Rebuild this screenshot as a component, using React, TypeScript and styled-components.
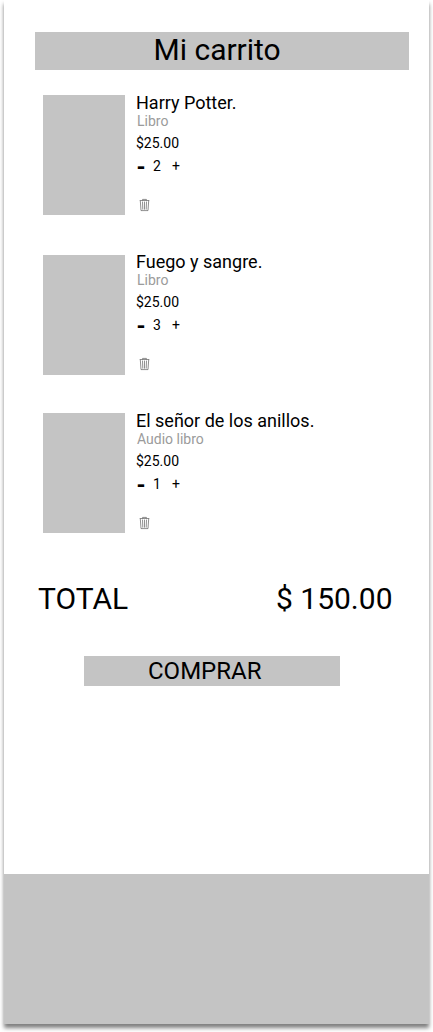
import React from "react";
import styled, { createGlobalStyle } from "styled-components";

const GlobalStyle = createGlobalStyle`
  * { box-sizing: border-box; }
  body {
    margin: 0;
    background: #fff;
    color: #000;
    font-family: Roboto, sans-serif;
  }
`;

const Page = styled.div`
  height: 1032px;
  padding: 0 4px 8px;
  overflow: hidden;
  background: #fff;
`;

const Screen = styled.main`
  display: flex;
  flex-direction: column;
  width: 425px;
  height: 1024px;
  background: #fff;
  box-shadow: 0 4px 4px rgba(0, 0, 0, 0.5);
`;

const Header = styled.h1`
  width: 374px;
  height: 38px;
  margin: 32px 0 0 31px;
  padding-left: 118.5px;
  background: #c4c4c4;
  font-size: 30px;
  font-weight: 400;
  line-height: 35px;
  white-space: nowrap;
`;

const Items = styled.ul`
  margin: 22px 0 0;
  padding: 0 0 0 39px;
  list-style: none;
`;

const Item = styled.li`
  display: flex;
  align-items: flex-start;
  height: 159px;
`;

const Cover = styled.div<{ $offset: number }>`
  width: 82px;
  height: 120px;
  margin-top: ${({ $offset }) => $offset}px;
  background: #c4c4c4;
`;

const Details = styled.div`
  display: flex;
  flex-direction: column;
  align-items: flex-start;
  margin-left: 11px;
`;

const Title = styled.h2`
  margin: 0;
  font-size: 18px;
  font-weight: 400;
  line-height: 21px;
  white-space: nowrap;
`;

const Kind = styled.span`
  margin-left: 1px;
  color: #9b9b9b;
  font-size: 14px;
  line-height: 16px;
`;

const Price = styled.span`
  margin-top: 6px;
  font-size: 14px;
  line-height: 16px;
`;

const Quantity = styled.div`
  display: flex;
  height: 16px;
  margin-top: 7px;
  font-size: 14px;
  line-height: 16px;
`;

const Step = styled.button<{ $minus?: boolean }>`
  width: ${({ $minus }) => ($minus ? 17 : 10)}px;
  height: ${({ $minus }) => ($minus ? 18 : 16)}px;
  padding: ${({ $minus }) => ($minus ? "2px 0 0 0.5px" : "0")};
  border: 0;
  background: none;
  color: #000;
  font-family: inherit;
  font-size: ${({ $minus }) => ($minus ? 23 : 14)}px;
  font-weight: ${({ $minus }) => ($minus ? 700 : 400)};
  line-height: 16px;
  text-align: left;
`;

const Count = styled.span`
  width: 19px;
`;

const Remove = styled.button`
  display: flex;
  margin: 24px 0 0 3px;
  padding: 0;
  border: 0;
  background: none;
`;

const Total = styled.div`
  display: flex;
  justify-content: space-between;
  margin: 12px 36.5px 0 34px;
  font-size: 30px;
  line-height: 35px;
`;

const Buy = styled.button`
  width: 256px;
  height: 30px;
  margin: 40px 0 0 80px;
  padding: 0 0 0 64px;
  border: 0;
  background: #c4c4c4;
  color: #000;
  font-family: inherit;
  font-size: 24px;
  line-height: 30px;
  text-align: left;
`;

const Footer = styled.footer`
  height: 150px;
  margin-top: auto;
  background: #c4c4c4;
`;

const TrashIcon = () => (
  <svg width="11" height="14" viewBox="0 0 11 14" fill="none" stroke="#444" strokeWidth="0.6">
    <path d="M0.7 2.5H10.3M3.6 2.4V1.4H7.4V2.4M1.3 2.7L2 12.6H9L9.7 2.7M3.5 3.6L3.8 11.6M5.5 3.6V11.6M7.5 3.6L7.2 11.6" />
  </svg>
);

const books = [
  { title: "Harry Potter.", kind: "Libro", count: 2, coverOffset: 3 },
  { title: "Fuego y sangre.", kind: "Libro", count: 3, coverOffset: 4 },
  { title: "El señor de los anillos.", kind: "Audio libro", count: 1, coverOffset: 3 },
];

export default function App() {
  return (
    <Page>
      <GlobalStyle />
      <Screen>
        <Header>Mi carrito</Header>
        <Items>
          {books.map((book) => (
            <Item key={book.title}>
              <Cover $offset={book.coverOffset} />
              <Details>
                <Title>{book.title}</Title>
                <Kind>{book.kind}</Kind>
                <Price>$25.00</Price>
                <Quantity>
                  <Step $minus>-</Step>
                  <Count>{book.count}</Count>
                  <Step>+</Step>
                </Quantity>
                <Remove aria-label="Eliminar">
                  <TrashIcon />
                </Remove>
              </Details>
            </Item>
          ))}
        </Items>
        <Total>
          <span>TOTAL</span>
          <span>$ 150.00</span>
        </Total>
        <Buy>COMPRAR</Buy>
        <Footer />
      </Screen>
    </Page>
  );
}
